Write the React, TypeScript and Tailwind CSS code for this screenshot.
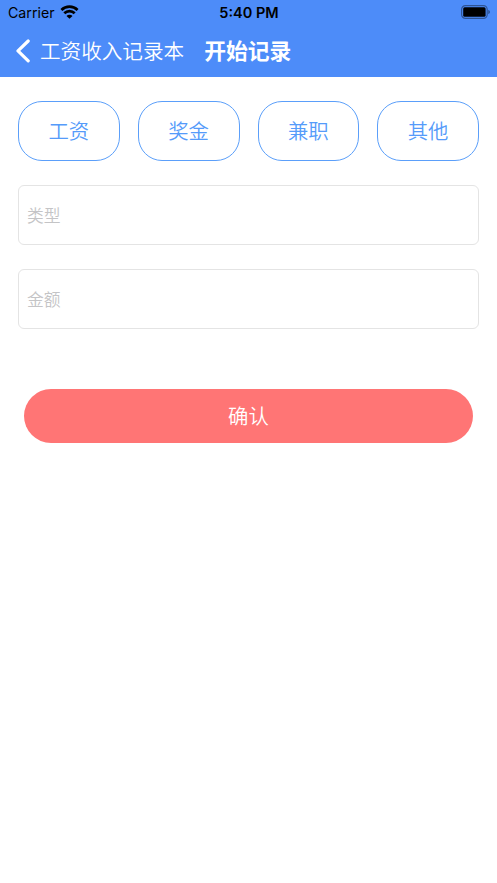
import { useState } from 'react';

const categories = ['工资', '奖金', '兼职', '其他'];

export default function App() {
  const [type, setType] = useState('');
  const [amount, setAmount] = useState('');

  return (
    <div className="min-h-[883px] w-full bg-white font-['Inter','Noto_Sans_CJK_SC',sans-serif]">
      <header className="h-[77px] bg-[#4d8cf9]">
        <StatusBar />
        <nav className="flex h-[50px] items-center pl-4 text-white">
          <svg className="h-6 w-[14px]" viewBox="0 0 14 24" fill="none" stroke="currentColor" strokeWidth="3.2" strokeLinecap="round" strokeLinejoin="round">
            <path d="M12.2 2 2 11.900l10.200 9.900" />
          </svg>
          <button className="ml-[10px] pt-0.5 text-[20.6px] font-[350] leading-none">工资收入记录本</button>
          <h1 className="ml-[20px] pt-0.5 text-[21.8px] font-bold leading-none">开始记录</h1>
        </nav>
      </header>

      <main className="px-[18px] pt-6">
        <div className="grid grid-cols-4 gap-[18px]">
          {categories.map((name) => (
            <button key={name} onClick={() => setType(name)} className="h-[60px] rounded-[24px] border-[1.2px] border-[#5b9ffa] pt-0.5 text-[20.4px] font-[350] text-[#559bfa]">
              {name}
            </button>
          ))}
        </div>
        <input value={type} onChange={(e) => setType(e.target.value)} placeholder="类型" className={inputCls} />
        <input value={amount} onChange={(e) => setAmount(e.target.value)} placeholder="金额" className={inputCls} />
        <div className="px-1.5 pt-[60px]">
          <button className="h-[54px] w-full rounded-full bg-[#ff7575] pt-0.5 text-[20.4px] font-[350] text-white">确认</button>
        </div>
      </main>
    </div>
  );
}

function StatusBar() {
  return (
    <div className="flex h-[26px] items-center justify-between pl-2 pr-[7px] text-[14.5px] leading-none text-black">
      <div className="flex w-[120px] items-center gap-[5px]">
        <span className="text-[14.2px]">Carrier</span>
        <svg className="mb-0.5 h-[14px] w-[19px]" viewBox="0 0 19 14" fill="none" stroke="currentColor" strokeWidth="2.700">
          <path d="M1.400 5a11.600 11.600 0 0 1 16.200 0M4.300 8.200a7.400 7.400 0 0 1 10.400 0" />
          <path d="M6.500 10.900a4.200 4.200 0 0 1 6 0l-3 2.900Z" fill="currentColor" stroke="none" />
        </svg>
      </div>
      <span className="font-semibold">5:40 PM</span>
      <div className="flex w-[120px] justify-end">
        <svg className="mb-0.5 h-[14px] w-[29px]" viewBox="0 0 29 14">
          <rect x=".6" y=".6" width="25.600" height="12.800" rx="3.800" fill="none" stroke="#000" strokeWidth="1.200" strokeOpacity=".4" />
          <rect x="2.200" y="2.200" width="22.400" height="9.600" rx="1.500" />
          <path d="M27.400 5c1.800.6 1.800 3.400 0 4Z" fillOpacity=".5" />
        </svg>
      </div>
    </div>
  );
}

const inputCls = 'mt-6 block h-[60px] w-full rounded-[6px] border border-[#e4e4e4] px-2 pt-0.5 text-[16.8px] font-[350] text-black placeholder:text-[#c4c4c6] focus:outline-none';
